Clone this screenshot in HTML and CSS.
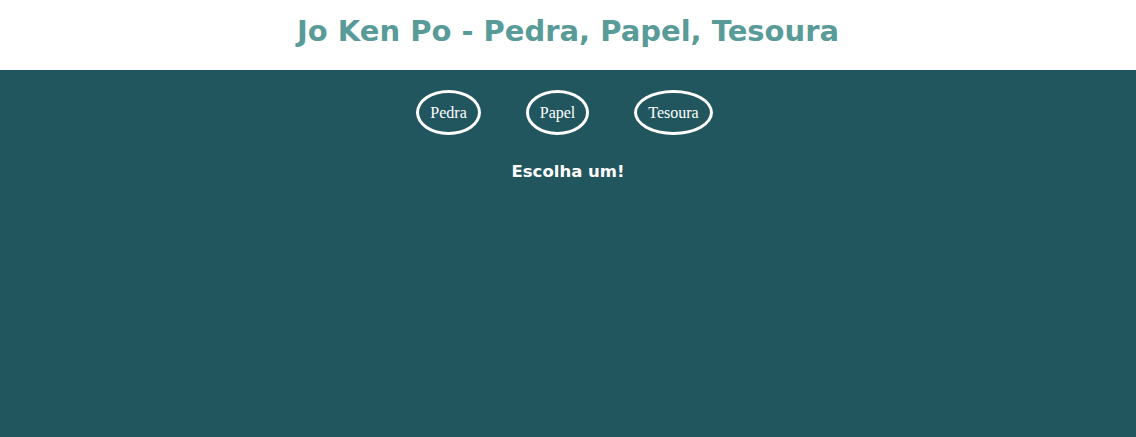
FILE: index.html
```html
<!DOCTYPE html>
<html lang="pt-BR">
<head>
<meta charset="utf-8">
<title>Jo Ken Po</title>
<link rel="stylesheet" href="styles.css">
</head>
<body>
<header class="topo">
  <h1 class="titulo">Jo Ken Po - Pedra, Papel, Tesoura</h1>
</header>
<main class="jogo">
  <div class="escolhas">
    <button class="opcao">Pedra</button>
    <button class="opcao">Papel</button>
    <button class="opcao">Tesoura</button>
  </div>
  <p class="mensagem">Escolha um!</p>
</main>
</body>
</html>
```
FILE: styles.css
```css
html, body {
  margin: 0;
  padding: 0;
  height: 100%;
}
body {
  background: #22565f;
  font-family: "Comic Sans MS", "DejaVu Sans", sans-serif;
  display: flex;
  flex-direction: column;
}
.topo {
  background: #ffffff;
  height: 70px;
  display: flex;
  align-items: center;
  justify-content: center;
  box-sizing: border-box;
  padding-bottom: 7px;
}
.titulo {
  margin: 0;
  color: #589b98;
  font-size: 29px;
  font-weight: bold;
  line-height: 1.2;
}
.jogo {
  flex: 1;
  display: flex;
  flex-direction: column;
  align-items: center;
  padding-top: 20px;
}
.escolhas {
  display: flex;
  gap: 45px;
  padding-right: 7px;
}
.opcao {
  background: transparent;
  color: #ffffff;
  border: 3px solid #ffffff;
  border-radius: 50%;
  font-family: "Liberation Serif", "Times New Roman", serif;
  font-size: 16px;
  height: 45px;
  padding: 0 11px;
  cursor: pointer;
}
.mensagem {
  margin: 27px 0 0;
  color: #ffffff;
  font-size: 16.5px;
  font-weight: bold;
}
```
